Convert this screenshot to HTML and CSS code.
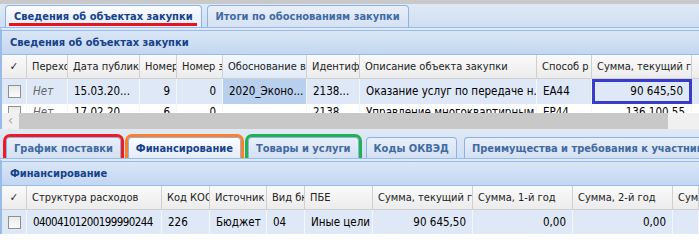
FILE: index.html
```html
<!DOCTYPE html>
<html lang="ru">
<head>
    <meta charset="UTF-8">
    <title>Сведения об объектах закупки</title>
    <link rel="stylesheet" href="styles.css">
</head>
<body>
    <div class="topline"></div>

    <div class="tabbar">
        <div class="tab active mark-underline">Сведения об объектах закупки</div>
        <div class="tab">Итоги по обоснованиям закупки</div>
    </div>

    <div class="panel">
        <div class="panel-title">Сведения об объектах закупки</div>
        <div class="grid grid-top">
            <div class="hd chk">&#10003;</div>
            <div class="hd">Переходящая</div>
            <div class="hd">Дата публикации</div>
            <div class="hd">Номер</div>
            <div class="hd">Номер з</div>
            <div class="hd sorted">Обоснование в</div>
            <div class="hd">Идентиф</div>
            <div class="hd">Описание объекта закупки</div>
            <div class="hd">Способ р</div>
            <div class="hd">Сумма, текущий год</div>
            <div class="hd">&nbsp;</div>

            <div class="cell chk sel"><span class="box"></span></div>
            <div class="cell sel no">Нет</div>
            <div class="cell sel">15.03.20...</div>
            <div class="cell sel num">9</div>
            <div class="cell sel num">0</div>
            <div class="cell sel focus">2020_Эконо...</div>
            <div class="cell sel">2138...</div>
            <div class="cell sel">Оказание услуг по передаче н...</div>
            <div class="cell sel">ЕА44</div>
            <div class="cell sel num mark-blue">90 645,50</div>
            <div class="cell sel"></div>

            <div class="cell part chk"><span class="box"></span></div>
            <div class="cell part no">Нет</div>
            <div class="cell part">17.02.20...</div>
            <div class="cell part num">6</div>
            <div class="cell part num">0</div>
            <div class="cell part"></div>
            <div class="cell part">2138...</div>
            <div class="cell part">Управление многоквартирным</div>
            <div class="cell part">ЕР44</div>
            <div class="cell part num">136 100,55</div>
            <div class="cell part"></div>
        </div>
        <div class="hscroll">&lsaquo;</div>
    </div>

    <div class="gap"></div>

    <div class="tabbar lower">
        <div class="tab mark-red">График поставки</div>
        <div class="tab active mark-orange">Финансирование</div>
        <div class="tab mark-green">Товары и услуги</div>
        <div class="tab">Коды ОКВЭД</div>
        <div class="tab">Преимущества и требования к участникам</div>
    </div>

    <div class="panel">
        <div class="panel-title">Финансирование</div>
        <div class="grid grid-bottom">
            <div class="hd chk">&#10003;</div>
            <div class="hd">Структура расходов</div>
            <div class="hd">Код КОСГУ</div>
            <div class="hd">Источник</div>
            <div class="hd">Вид бюджета</div>
            <div class="hd">ПБЕ</div>
            <div class="hd">Сумма, текущий год</div>
            <div class="hd">Сумма, 1-й год</div>
            <div class="hd">Сумма, 2-й год</div>
            <div class="hd">Сумма, 3-й год</div>

            <div class="cell chk sel"><span class="box"></span></div>
            <div class="cell sel code">04004101200199990244</div>
            <div class="cell sel">226</div>
            <div class="cell sel">Бюджет</div>
            <div class="cell sel">04</div>
            <div class="cell sel">Иные цели</div>
            <div class="cell sel num">90 645,50</div>
            <div class="cell sel num">0,00</div>
            <div class="cell sel num">0,00</div>
            <div class="cell sel"></div>
        </div>
    </div>
</body>
</html>
```

FILE: styles.css
```css
body {
    margin: 0;
    background: #fff;
    font-family: "DejaVu Sans Condensed", "Liberation Sans", sans-serif;
    font-size: 11px;
    color: #000;
    width: 699px;
    overflow: hidden;
}
.topline {
    height: 4px;
    background: #c9c9c9;
}
.tabbar {
    display: flex;
    gap: 5px;
    padding: 1px 0 0 5px;
    height: 22px;
    background: linear-gradient(#dfe9f6, #cfdff3);
    border-bottom: 1px solid #99bbe8;
    overflow: hidden;
}
.tab {
    position: relative;
    flex-shrink: 0;
    padding: 4px 8px 0;
    height: 17px;
    background: linear-gradient(#e8eff9, #d4e1f2);
    border: 1px solid #8db2e3;
    border-bottom: none;
    border-radius: 4px 4px 0 0;
    color: #416aa3;
    font-weight: bold;
    white-space: nowrap;
}
.tab.active {
    background: linear-gradient(#fafcff, #e3ecf8);
    color: #15428b;
    height: 18px;
}
.mark-underline::after {
    content: "";
    position: absolute;
    left: 3px;
    right: 4px;
    bottom: 2px;
    height: 3px;
    background: #e8141c;
}
.panel {
    border-left: 2px solid #99bbe8;
    border-top: 2px solid #deeafa;
}
.panel-title {
    height: 23px;
    line-height: 23px;
    padding-left: 8px;
    background: linear-gradient(#dae6f6, #c3d7f1);
    border-top: 1px solid #99bbe8;
    border-bottom: 1px solid #99bbe8;
    color: #15428b;
    font-weight: bold;
}
.grid {
    display: grid;
    background: #fff;
}
.grid-top {
    grid-template-columns: 25px 41px 72px 37px 46px 84px 53px 177px 55px 100px 1fr;
    grid-template-rows: 24px 25px 9px;
    overflow: hidden;
}
.grid-bottom {
    grid-template-columns: 25px 135px 48px 57px 38px 68px 100px 100px 100px 1fr;
    grid-template-rows: 24px 24px;
}
.hd {
    padding: 0 5px;
    line-height: 23px;
    background: linear-gradient(#fafafa, #ececec);
    border-right: 1px solid #d0d0d0;
    border-bottom: 1px solid #d0d0d0;
    white-space: nowrap;
    overflow: hidden;
    color: #222;
}
.hd.sorted {
    background: linear-gradient(#f2f7fd, #e1ebf8);
}
.chk {
    text-align: center;
    padding: 0;
}
.cell {
    position: relative;
    padding: 0 6px;
    line-height: 24px;
    border-right: 1px solid #f3f6fb;
    white-space: nowrap;
    overflow: hidden;
    font-size: 11.5px;
}
.cell.part {
    line-height: 16px;
}
.cell.part .box {
    margin-top: 2px;
}
.cell.sel {
    background: #dfe8f6;
}
.cell.focus {
    background: #b8cfee;
}
.cell.num {
    text-align: right;
}
.cell.no {
    font-style: italic;
    color: #666;
}
.cell.code {
    letter-spacing: -0.6px;
}
.box {
    display: inline-block;
    width: 11px;
    height: 11px;
    margin-top: 6px;
    border: 1px solid #8f8f8f;
    background: linear-gradient(#eaeaea, #fbfbfb);
    vertical-align: top;
}
.mark-blue {
    outline: 3px solid #383cc8;
    outline-offset: -3px;
    padding-right: 8px;
}
.hscroll {
    height: 16px;
    line-height: 15px;
    padding-left: 6px;
    font-size: 14px;
    color: #a3a3a3;
    background: linear-gradient(to right, #f0f0f0 17px, #c8c8c8 17px, #c8c8c8 666px, #f0f0f0 666px);
}
.gap {
    height: 2px;
    background: #e3e9f1;
}
.lower {
    height: 21px;
    padding-top: 6px;
    gap: 7px;
    padding-left: 6px;
}
.lower .tab {
    padding: 4px 7px 0;
    height: 16px;
}
.lower .tab.active {
    height: 17px;
}
.mark-red {
    outline: 3px solid #ed1c24;
}
.mark-orange {
    outline: 3px solid #ff7f27;
}
.mark-green {
    outline: 3px solid #22b14c;
}
```
